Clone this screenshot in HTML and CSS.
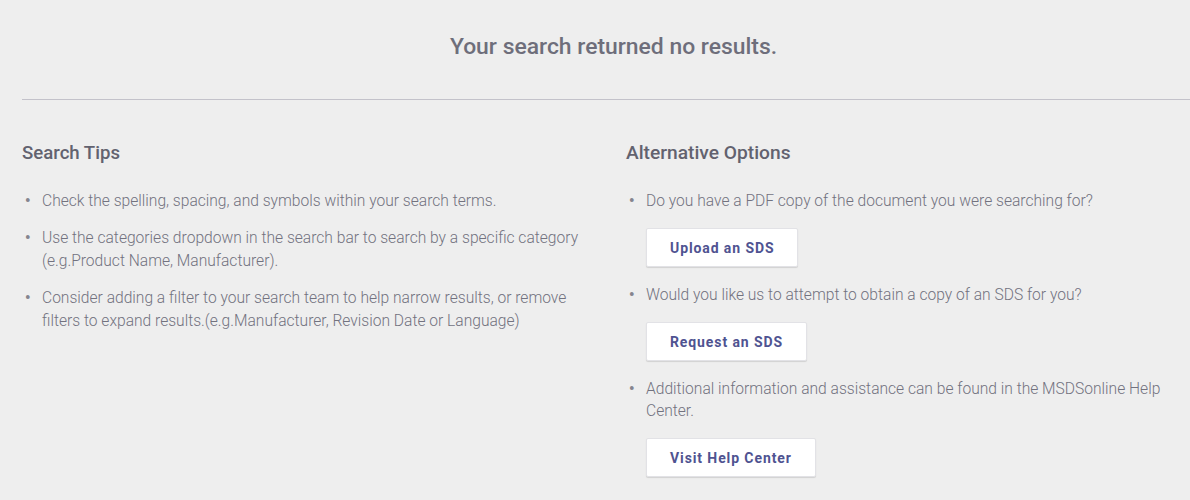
FILE: index.html
```html
<!DOCTYPE html>
<html>
<head>
<meta charset="utf-8">
<link rel="stylesheet" href="styles.css">
</head>
<body>
<div class="page">
  <h1 class="title">Your search returned no results.</h1>
  <hr class="divider">
  <div class="columns">
    <section class="col col-left">
      <h2 class="col-title">Search Tips</h2>
      <ul class="list">
        <li>Check the spelling, spacing, and symbols within your search terms.</li>
        <li>Use the categories dropdown in the search bar to search by a specific category (e.g.Product Name, Manufacturer).</li>
        <li>Consider adding a filter to your search team to help narrow results, or remove filters to expand results.(e.g.Manufacturer, Revision Date or Language)</li>
      </ul>
    </section>
    <section class="col col-right">
      <h2 class="col-title">Alternative Options</h2>
      <ul class="list">
        <li>Do you have a PDF copy of the document you were searching for?
          <div class="btn-row"><button class="btn">Upload an SDS</button></div>
        </li>
        <li>Would you like us to attempt to obtain a copy of an SDS for you?
          <div class="btn-row"><button class="btn">Request an SDS</button></div>
        </li>
        <li>Additional information and assistance can be found in the MSDSonline Help Center.
          <div class="btn-row"><button class="btn">Visit Help Center</button></div>
        </li>
      </ul>
    </section>
  </div>
</div>
</body>
</html>
```

FILE: styles.css
```css
html, body {
  margin: 0;
  padding: 0;
  background: #eeeeee;
}
body {
  font-family: Roboto, "Liberation Sans", sans-serif;
  color: #72727f;
}
.page {
  padding: 0 0 0 22px;
}
.title {
  margin: 0;
  padding-top: 34px;
  padding-left: 15px;
  height: 99px;
  box-sizing: border-box;
  text-align: center;
  font-size: 22.9px;
  font-weight: 500;
  color: #6e6e7b;
  line-height: 26px;
}
.divider {
  margin: 0;
  border: 0;
  border-top: 1px solid #c3c2ca;
  height: 0;
}
.columns {
  display: grid;
  grid-template-columns: 604px 1fr;
  padding-top: 40px;
}
.col-title {
  margin: 0 0 24px 0;
  font-size: 18.6px;
  font-weight: 500;
  color: #62626f;
  line-height: 26px;
}
.col-right .col-title {
  font-size: 19.2px;
}
.list {
  margin: 0;
  padding: 0 0 0 20px;
  list-style: none;
  font-size: 15.6px;
  line-height: 23px;
  font-weight: 300;
}
.list li {
  margin-bottom: 14px;
}
.list li::before {
  content: "\2022";
  display: inline-block;
  width: 16px;
  margin-left: -16px;
  color: #85858f;
  transform: scale(1.3);
  transform-origin: 30% 60%;
}
.col-left {
  padding-right: 22px;
}
.col-right {
  padding-right: 18px;
}
.col-right .list {
  line-height: 22px;
}
.col-right .list li {
  margin-bottom: 17px;
}
.btn-row {
  padding-top: 16px;
}
.btn {
  font-family: inherit;
  background: #ffffff;
  border: 1px solid #e2e2e6;
  border-radius: 2px;
  box-shadow: 0 1px 1px rgba(0,0,0,0.12);
  height: 39px;
  padding: 0 23px;
  font-size: 14px;
  font-weight: 700;
  letter-spacing: 0.9px;
  color: #4f5391;
}
```
